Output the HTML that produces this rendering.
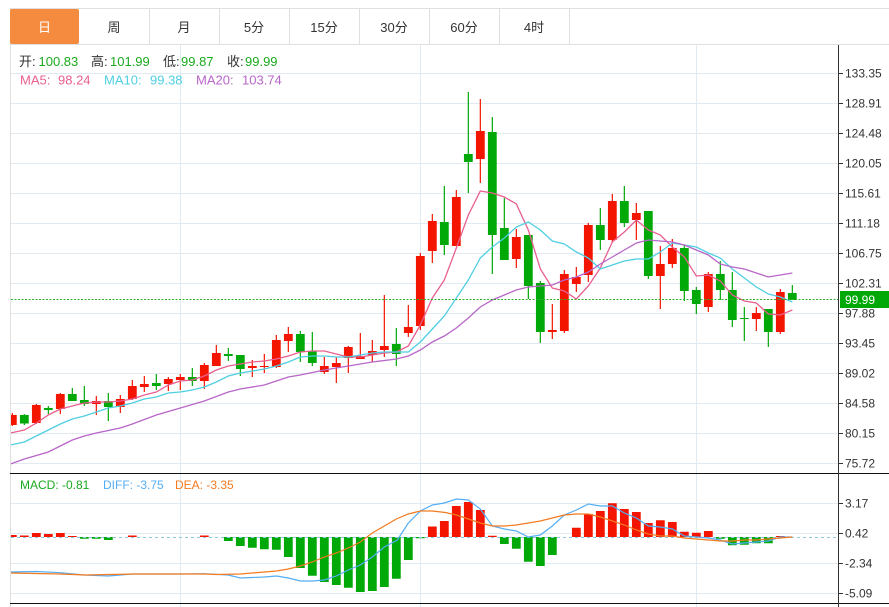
<!DOCTYPE html>
<html><head><meta charset="utf-8"><style>
html,body{margin:0;padding:0;background:#fff;width:889px;height:607px;overflow:hidden}
svg{display:block}
text{font-family:"Liberation Sans","Noto Sans CJK SC",sans-serif;font-size:12px;fill:#333}
.v{font-size:13px}
.t{font-size:13px;text-anchor:middle}
</style></head><body>
<svg width="889" height="607" viewBox="0 0 889 607" xmlns="http://www.w3.org/2000/svg">
<defs><clipPath id="c"><rect x="11" y="45" width="827" height="562"/></clipPath></defs>
<!-- tabs -->
<path d="M10 8.5H889M10 44.5H889M10.5 8V607" stroke="#dfdfdf" fill="none"/>
<path d="M149.5 9V44M219.5 9V44M289.5 9V44M359.5 9V44M429.5 9V44M499.5 9V44M569.5 9V44" stroke="#dfdfdf" fill="none"/>
<rect x="10" y="9" width="69" height="35" rx="2" fill="#f48b3f"/>
<text class="t" x="44.5" y="32" style="fill:#fff">日</text>
<text class="t" x="114" y="32">周</text>
<text class="t" x="184" y="32">月</text>
<text class="t" x="254" y="32">5分</text>
<text class="t" x="324" y="32">15分</text>
<text class="t" x="394" y="32">30分</text>
<text class="t" x="464" y="32">60分</text>
<text class="t" x="534" y="32">4时</text>
<!-- grid -->
<path d="M11 73.5H838M11 103.5H838M11 133.5H838M11 163.5H838M11 193.5H838M11 223.5H838M11 253.5H838M11 283.5H838M11 313.5H838M11 343.5H838M11 373.5H838M11 403.5H838M11 433.5H838M11 463.5H838M11 503.5H838M11 533.5H838M11 563.5H838M11 593.5H838M180.5 45V607M420.5 45V607M696.5 45V607" stroke="#e2eaf1" fill="none"/>
<!-- candles -->
<g clip-path="url(#c)"><g transform="translate(.33 0)" fill="none">
<path stroke="#f31500" stroke-width="1.2" d="M12 413V426M36 404V424M60 393V414M96 396V415M120 395V413M132 380V400M144 376V392M168 377V391M180 374V390M204 363V389M216 345V366M252 360V377M264 354V373M276 335V368M288 327V352M324 357V374M336 357V383M348 346V373M360 333V359M372 340V362M384 295V357M408 305V337M420 253V330M432 214V263M456 190V246M480 99V183M516 229V268M552 304V339M564 270V333M576 267V292M588 223V282M612 194V242M636 203V240M660 246V309M672 239V268M708 272V312M756 307V331M780 289V334"/>
<path stroke="#f31500" stroke-width="8.8" d="M12 415V425M36 405V423M60 394V409M96 401V404M120 399V407M132 386V399M144 384V387M168 379V384M180 377V380M204 365V381M216 353V366M252 366V368M264 366V367M276 340V367M288 334V341M324 366V372M336 363V367M348 347V358M360 356V359M372 351V355M384 346V350M408 327V333M420 256V326M432 221V251M456 197V246M480 131V159M516 237V259M552 330V332M564 274V331M576 277V284M588 225V275M612 201V240M636 213V220M660 264V276M672 248V264M708 274V307M756 313V319M780 292V332"/>
<path stroke="#00a808" stroke-width="1.2" d="M24 414V425M48 406V414M72 388V401M84 386V406M108 393V421M156 374V390M192 368V386M228 348V361M240 355V376M300 331V362M312 332V366M396 328V366M444 186V255M468 92V193M492 117V274M504 198V260M528 235V299M540 281V343M600 208V250M624 186V227M648 211V279M684 245V301M696 287V314M720 261V300M732 272V327M744 307V341M768 309V347M792 285V300"/>
<path stroke="#00a808" stroke-width="8.8" d="M24 415V423.500M48 408V410M72 394V401M84 400V404M108 401V407M156 383V386M192 377V381M228 354V356M240 355V369M300 334V352M312 351V363M396 344V354M444 222V245M468 154V162M492 132V235M504 228V260M528 235V286M540 283V332M600 225V240M624 201V223M648 211V276M684 248V291M696 290V304M720 274V290M732 290V320M744 318V319M768 309V332M792 293V300"/>
<!-- MA -->
<polyline fill="none" stroke="#e85f90" stroke-width="1.3" points="10,433 24,430 36,423 48,415 60,409 72,406 84,403 96,402 108,402 120,401 132,399 144,395 156,392 168,385 180,381 192,380 204,376 216,370 228,366 240,364 252,362 264,361 276,359 288,356 300,352 312,351 324,351 336,354 348,357 360,357 372,355 384,353 396,352 408,346 420,325 432,298 444,280 456,248 468,215 480,191 492,193 504,197 516,204 528,230 540,269 552,288 564,291 576,299 588,286 600,268 612,242 624,232 636,220 648,230 660,235 672,247 684,257 696,276 708,275 720,281 732,295 744,301 756,303 768,314 780,315 792,310"/>
<polyline fill="none" stroke="#4fcfe2" stroke-width="1.3" points="10,445 24,442 36,436 48,430 60,424 72,419 84,416 96,412 108,408 120,406 132,403 144,399 156,397 168,393 180,392 192,390 204,387 216,382 228,376 240,373 252,371 264,369 276,366 288,362 300,357 312,356 324,356 336,357 348,357 360,355 372,353 384,352 396,352 408,352 420,342 432,329 444,316 456,298 468,280 480,258 492,247 504,238 516,227 528,222 540,230 552,241 564,244 576,252 588,258 600,269 612,265 624,261 636,259 648,259 660,252 672,243 684,245 696,247 708,253 720,258 732,269 744,278 756,287 768,294 780,297 792,302"/>
<polyline fill="none" stroke="#b866c8" stroke-width="1.3" points="10,464 24,459 48,452 60,446 72,440 84,436 96,433 120,428 132,424 156,415 180,408 204,401 228,392 240,389 264,385 276,381 288,377 300,375 324,370 372,362 396,359 408,356 420,350 432,342 444,336 456,328 468,318 480,307 492,300 504,295 516,290 528,287 540,286 552,285 564,280 576,277 588,272 600,264 612,257 624,250 636,243 648,240 660,241 672,242 684,245 696,250 708,255 720,264 732,267 744,269 756,273 768,277 780,275 792,273"/>
<!-- MACD bars -->
<path stroke="#f31500" stroke-width="8.8" fill="none" d="M12 535V537M24 535.500V537M36 533V537M48 534V537M60 533V537M72 536V537M132 535.500V537M204 535.500V537M432 526.500V537M444 521V537M456 506V537M468 502V537M480 510V537M492 535.700V537M576 527.700V537M588 514V537M600 511V537M612 503.300V537M624 509V537M636 512V537M648 523V537M660 520.300V537M672 522V537M684 531.700V537M696 532.700V537M708 531V537M780 536V537"/>
<path stroke="#00a808" stroke-width="8.800" fill="none" d="M84 537V538.700M96 537V538.700M108 537V540M228 537V541M240 537V546M252 537V547.700M264 537V549.300M276 537V549.700M288 537V557M300 537V568M312 537V575.700M324 537V582M336 537V585M348 537V587.700M360 537V592M372 537V591M384 537V587M396 537V578.700M408 537V560M420 537V538.300M504 537V544M516 537V548.700M528 537V561.700M540 537V566M552 537V555M720 537V538.700M732 537V545.300M744 537V544.700M756 537V543.300M768 537V543.300"/>
</g>
<path d="M11 537.500H838" stroke="#8fc7dc" stroke-dasharray="3 3" fill="none"/>
<g transform="translate(.33 0)" fill="none">
<polyline stroke="#55aef5" stroke-width="1.2" points="10,572 36,571.500 60,572.700 84,575 108,576 132,574 180,574 204,573.700 228,575 240,578 264,577 276,576 288,578 300,581 312,581 324,580 336,576 348,570 360,565 372,557 384,547 397,540 408,523 420,511 432,505 444,503 456,499 468,500 480,509 492,526 504,529 516,531 528,537 540,535 552,526 564,515 576,510 588,504 600,506 612,506 624,513 636,518 648,526 660,527 672,529 684,536 696,537 708,538 720,540 732,544 744,543 756,542 768,541 780,537 792,537"/>
<polyline stroke="#f47a20" stroke-width="1.2" points="10,573 60,574 84,575 132,574 204,574 216,574.500 240,574 264,572 276,571 288,569 300,566 312,562 324,557 336,553 348,548 360,542 372,533 384,526 396,519 408,514 420,511 432,511 445,512.500 456,515 468,519 480,523 492,526 504,526 516,525 528,523 540,521 552,518 564,515 576,514 588,514 600,517 612,521 624,525 636,530 648,534 660,536 672,536 684,538 696,539 708,540 720,541 732,541 744,540 756,540 768,539 780,538 792,537"/>
</g></g>
<!-- price line -->
<path d="M11 299.500H838" stroke="#2cb02c" stroke-dasharray="2 1.500" fill="none"/>
<!-- axes -->
<path d="M10 473.500H889M10 603.500H889" stroke="#111" fill="none"/>
<path d="M838.500 45V607" stroke="#333" fill="none"/>
<path d="M838 73.500h5M838 103.500h5M838 133.500h5M838 163.500h5M838 193.500h5M838 223.500h5M838 253.500h5M838 283.500h5M838 313.500h5M838 343.500h5M838 373.500h5M838 403.500h5M838 433.500h5M838 463.500h5M838 503.500h5M838 533.500h5M838 563.500h5M838 593.500h5" stroke="#333" fill="none"/>
<g>
<text x="845" y="77.500">133.35</text><text x="845" y="107.500">128.91</text><text x="845" y="137.500">124.48</text><text x="845" y="167.500">120.05</text><text x="845" y="197.500">115.61</text><text x="845" y="227.500">111.18</text><text x="845" y="257.500">106.75</text><text x="845" y="287.500">102.31</text><text x="845" y="317.500">97.88</text><text x="845" y="347.500">93.45</text><text x="845" y="377.500">89.02</text><text x="845" y="407.500">84.58</text><text x="845" y="437.500">80.15</text><text x="845" y="467.500">75.72</text>
<text x="845" y="507.500">3.17</text><text x="845" y="537.500">0.42</text><text x="845" y="567.500">-2.34</text><text x="845" y="597.500">-5.09</text>
</g>
<rect x="840" y="291" width="49" height="17" fill="#00a808"/>
<text x="845" y="304" style="fill:#fff">99.99</text>
<!-- legend -->
<text class="v" x="19" y="66">开:</text><text class="v" x="38.500" y="66" style="fill:#1aaa1e">100.83</text>
<text class="v" x="91" y="66">高:</text><text class="v" x="110" y="66" style="fill:#1aaa1e">101.99</text>
<text class="v" x="163" y="66">低:</text><text class="v" x="181" y="66" style="fill:#1aaa1e">99.87</text>
<text class="v" x="227" y="66">收:</text><text class="v" x="245" y="66" style="fill:#1aaa1e">99.99</text>
<text class="v" x="20" y="84.500" style="fill:#e85f90">MA5:</text><text class="v" x="58" y="84.500" style="fill:#e85f90">98.24</text>
<text class="v" x="104" y="84.500" style="fill:#4fcfe2">MA10:</text><text class="v" x="150" y="84.500" style="fill:#4fcfe2">99.38</text>
<text class="v" x="196" y="84.500" style="fill:#b866c8">MA20:</text><text class="v" x="242" y="84.500" style="fill:#b866c8">103.74</text>
<text x="20" y="489" style="fill:#1aaa1e">MACD: -0.81</text>
<text x="103" y="489" style="fill:#55aef5">DIFF: -3.75</text>
<text x="175" y="489" style="fill:#f47a20">DEA: -3.35</text>
</svg>
</body></html>
